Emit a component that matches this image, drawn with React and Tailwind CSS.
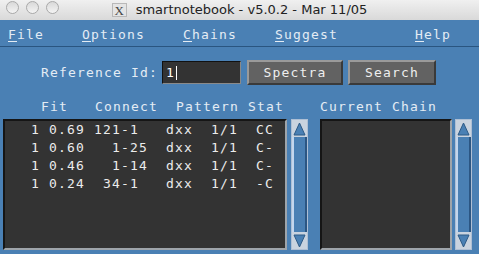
import React from "react";

const mono = { fontFamily: '"DejaVu Sans Mono", "Liberation Mono", monospace' };

const rows = [
  "1 0.69 121-1   dxx  1/1  CC",
  "1 0.60   1-25  dxx  1/1  C-",
  "1 0.46   1-14  dxx  1/1  C-",
  "1 0.24  34-1   dxx  1/1  -C",
];

function Menu({ label, className }) {
  return (
    <span className={className}>
      <span className="underline underline-offset-2">{label[0]}</span>
      {label.slice(1)}
    </span>
  );
}

function ScrollBar() {
  return (
    <div className="flex h-full w-[17px] flex-col bg-[#aebfd4] p-[1px]">
      <div className="flex h-[17px] items-center justify-center bg-[#c9d3df]">
        <svg width="13" height="14" viewBox="0 0 13 14">
          <polygon points="6.5,1 12,13 1,13" fill="#4a80b4" stroke="#2d5a86" strokeWidth="1" />
        </svg>
      </div>
      <div className="flex-1 border-l-2 border-r-2 border-l-[#c2d6ee] border-r-[#2b5683] bg-[#4a80b4]" />
      <div className="flex h-[17px] items-center justify-center bg-[#c9d3df]">
        <svg width="13" height="14" viewBox="0 0 13 14">
          <polygon points="1,1 12,1 6.5,13" fill="#4a80b4" stroke="#2d5a86" strokeWidth="1" />
        </svg>
      </div>
    </div>
  );
}

export default function App() {
  return (
    <div className="relative h-[254px] w-[479px] overflow-hidden bg-[#4a80b4]">
      {/* Title bar */}
      <div className="relative flex h-[20px] items-center justify-center bg-gradient-to-b from-[#f0f0f0] to-[#d9d9d9]">
        <div className="absolute left-[6px] top-[1px] flex gap-[7px]">
          {[0, 1, 2].map((i) => (
            <div
              key={i}
              className="h-[13px] w-[13px] rounded-full border border-[#a9a9a9] bg-gradient-to-b from-[#d8d8d8] to-[#f4f4f4]"
            />
          ))}
        </div>
        <div className="mr-[9px] flex h-[14px] w-[15px] items-center justify-center border border-[#b8b8b8] bg-[#e4e4e4] text-[13px] leading-none text-[#444]" style={{ fontFamily: '"Liberation Serif", serif' }}>
          X
        </div>
        <span className="text-[13px] text-[#222]" style={{ fontFamily: '"DejaVu Sans", sans-serif' }}>
          smartnotebook - v5.0.2 - Mar 11/05
        </span>
      </div>

      {/* Menu bar */}
      <div
        className="relative h-[27px] border-b border-[#2a5580] text-[13px] tracking-[1.17px] text-[#e4ecf4]"
        style={mono}
      >
        <Menu label="File" className="absolute left-[8px] top-[5px]" />
        <Menu label="Options" className="absolute left-[82px] top-[5px]" />
        <Menu label="Chains" className="absolute left-[183px] top-[5px]" />
        <Menu label="Suggest" className="absolute left-[275px] top-[5px]" />
        <Menu label="Help" className="absolute left-[415px] top-[5px]" />
      </div>

      {/* Reference row */}
      <div className="mt-[13px] flex h-[25px] items-center text-[13px] tracking-[1.17px] text-[#e4ecf4]" style={mono}>
        <span className="ml-[41px] whitespace-pre">Reference Id:</span>
        <div className="ml-[4px] flex h-[23px] w-[79px] items-center border border-t-[#111] border-l-[#111] border-r-[#8a8a8a] border-b-[#8a8a8a] bg-[#333333] pl-[3px] text-white">
          1<span className="ml-[1px] h-[14px] w-[1px] bg-white" />
        </div>
        <button className="ml-[6px] h-[25px] w-[96px] border-2 border-t-[#9a9a9a] border-l-[#9a9a9a] border-r-[#3a3a3a] border-b-[#3a3a3a] bg-[#626262] text-[#eeeeee]">
          Spectra
        </button>
        <button className="ml-[5px] h-[25px] w-[88px] border-2 border-t-[#9a9a9a] border-l-[#9a9a9a] border-r-[#3a3a3a] border-b-[#3a3a3a] bg-[#626262] text-[#eeeeee]">
          Search
        </button>
      </div>

      {/* Column headers */}
      <div className="mt-[13px] flex h-[18px] items-center whitespace-pre text-[13px] tracking-[1.17px] text-[#e4ecf4]" style={mono}>
        <span className="ml-[41px]">Fit   Connect  Pattern Stat</span>
        <span className="ml-[36px]">Current Chain</span>
      </div>

      {/* Lists */}
      <div className="ml-[3px] mt-[3px] flex h-[131px]">
        <div className="h-full w-[284px] border-2 border-t-[#151515] border-l-[#151515] border-r-[#9ea4aa] border-b-[#9ea4aa] bg-[#333333] pl-[26px] text-[13px] leading-[18px] tracking-[1.17px] text-[#ececec]" style={mono}>
          {rows.map((r, i) => (
            <div key={i} className="whitespace-pre">
              {r}
            </div>
          ))}
        </div>
        <div className="ml-[4px]">
          <ScrollBar />
        </div>
        <div className="ml-[12px] h-full w-[132px] border-2 border-t-[#151515] border-l-[#151515] border-r-[#9ea4aa] border-b-[#9ea4aa] bg-[#333333]" />
        <div className="ml-[3px]">
          <ScrollBar />
        </div>
      </div>
    </div>
  );
}
